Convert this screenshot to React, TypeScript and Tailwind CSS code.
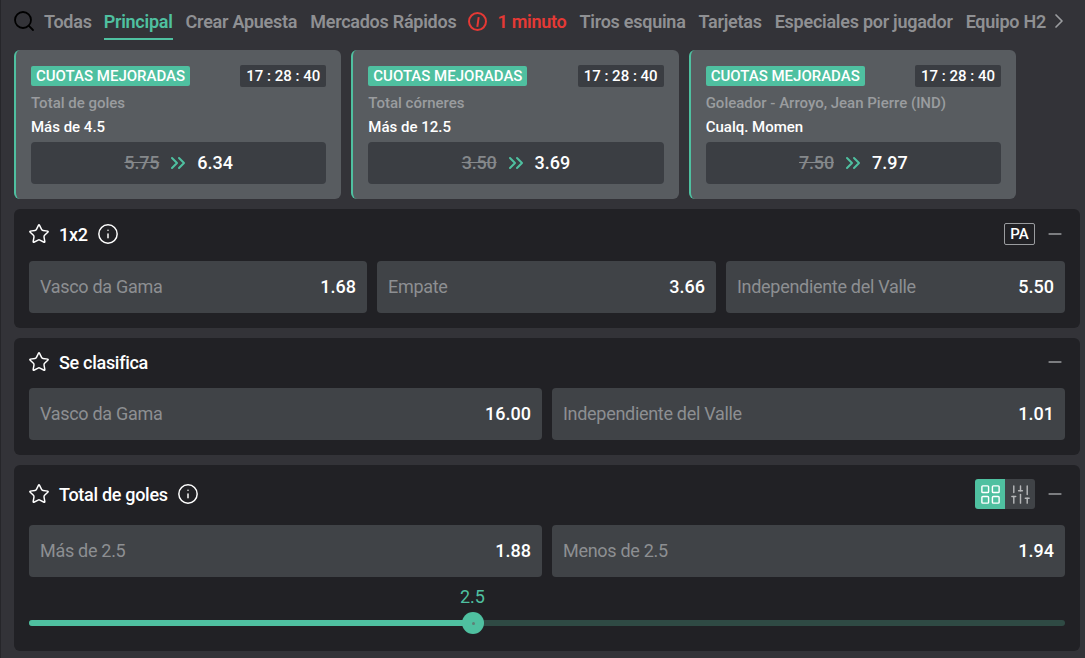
import type { ReactNode } from 'react'
import { Star, Info, ChevronRight, Search, Minus, ChevronsRight, LayoutGrid, SlidersVertical } from 'lucide-react'

const tabs = ['Crear Apuesta', 'Mercados Rápidos']
const tabsAfter = ['Tiros esquina', 'Tarjetas', 'Especiales por jugador', 'Equipo H2']

const boosts = [
  { market: 'Total de goles', pick: 'Más de 4.5', oldOdd: '5.75', newOdd: '6.34' },
  { market: 'Total córneres', pick: 'Más de 12.5', oldOdd: '3.50', newOdd: '3.69' },
  { market: 'Goleador - Arroyo, Jean Pierre (IND)', pick: 'Cualq. Momen', oldOdd: '7.50', newOdd: '7.97' },
]

function BoostCard({ market, pick, oldOdd, newOdd }: { market: string; pick: string; oldOdd: string; newOdd: string }) {
  return (
    <div className="w-[327.33px] h-[149px] rounded-[6px] bg-[#585c60] border-l-2 border-[#4fc0a0] pl-[15px] pr-[15px] pt-[15px]">
      <div className="flex items-center justify-between h-[22px]">
        <span className="h-[20px] px-[5px] rounded-[2px] bg-[#4fc0a0] text-white text-[15px] font-medium leading-[20px]">CUOTAS MEJORADAS</span>
        <span className="h-[22px] w-[86px] text-center rounded-[2px] bg-[#3a3d42] text-white text-[15px] font-medium leading-[22px]">17 : 28 : 40</span>
      </div>
      <div className="mt-[6px] text-[15px] leading-[20px] font-medium text-[#9a9c9f]">{market}</div>
      <div className="mt-[4px] text-[15px] leading-[20px] font-medium text-white">{pick}</div>
      <div className="mt-[5px] h-[42px] rounded-[4px] bg-[#3b3e43] flex items-center justify-center pb-[1px]">
        <span className="text-[18px] font-medium tracking-[-0.2px] text-[#85888b] line-through">{oldOdd}</span>
        <ChevronsRight className="w-[24px] h-[24px] mx-[7px] text-[#4fc0a0]" strokeWidth={2} />
        <span className="text-[18px] font-medium text-white">{newOdd}</span>
      </div>
    </div>
  )
}

function Odd({ label, value, wide }: { label: string; value: string; wide?: boolean }) {
  return (
    <div className={wide ? 'w-[338px] flex-none h-[52px] rounded-[4px] bg-[#404347] flex items-center justify-between px-[11px] pb-[2px]' : 'flex-1 h-[52px] rounded-[4px] bg-[#404347] flex items-center justify-between px-[11px] pb-[2px]'}>
      <span className="text-[18px] tracking-[-0.3px] text-[#8d8f92]">{label}</span>
      <span className="text-[18px] font-medium text-white">{value}</span>
    </div>
  )
}

function Header({ title, info, children }: { title: string; info?: boolean; children?: ReactNode }) {
  return (
    <div className="flex items-center h-[50px] pl-[14px] pr-[15px]">
      <Star className="w-[22px] h-[22px] text-white" strokeWidth={1.6} />
      <span className="ml-[9px] text-[18px] font-medium tracking-[-0.3px] text-white">{title}</span>
      {info && <Info className="ml-[9px] w-[22px] h-[22px] text-white" strokeWidth={1.6} />}
      <div className="ml-auto flex items-center">
        {children}
        <Minus className="ml-[10px] w-[20px] h-[20px] text-[#9a9c9f]" />
      </div>
    </div>
  )
}

export default function App() {
  return (
    <div className="w-[1085px] h-[658px] overflow-hidden bg-[#333338] border-l border-[#26262a] font-['Roboto',sans-serif]">
      {/* Tabs */}
      <div className="flex items-start h-[50px] pl-[11px] text-[18px] font-semibold tracking-[-0.26px] text-[#8f9093] whitespace-nowrap">
        <Search className="w-[24px] h-[24px] mt-[9px] text-black" strokeWidth={1.8} />
        <span className="ml-[8px] mt-[8px]">Todas</span>
        <span className="ml-[12px] pt-[8px] h-[40px] border-b-2 border-[#4fc0a0] text-[#4fc0a0]">Principal</span>
        {tabs.map((t) => (
          <span key={t} className="ml-[13px] mt-[8px]">{t}</span>
        ))}
        <span className="ml-[12px] mt-[12px] w-[19px] h-[19px] rounded-full border-2 border-[#e53935] flex items-center justify-center">
          <span className="w-[2px] h-[10px] bg-[#e53935] rotate-[8deg]"></span>
        </span>
        <span className="ml-[10px] mt-[8px] text-[#e53935]">1 minuto</span>
        {tabsAfter.map((t) => (
          <span key={t} className="ml-[13px] mt-[8px]">{t}</span>
        ))}
        <ChevronRight className="ml-[1px] mt-[9px] w-[24px] h-[24px] text-[#9a9c9f]" strokeWidth={1.7} />
      </div>

      <div className="pl-[13px] pr-[5px]">
        {/* Boosted odds */}
        <div className="flex gap-[10px]">
          {boosts.map((b) => (
            <BoostCard key={b.market} {...b} />
          ))}
        </div>

        {/* 1x2 */}
        <div className="mt-[10px] h-[119px] rounded-[6px] bg-[#212125]">
          <Header title="1x2" info>
            <span className="h-[22px] w-[31px] rounded-[2px] border border-[#9a9c9f] text-center text-[15px] leading-[20px] font-medium text-white">PA</span>
          </Header>
          <div className="flex gap-[10px] px-[15px] pt-[2px]">
            <Odd label="Vasco da Gama" value="1.68" wide />
            <Odd label="Empate" value="3.66" />
            <Odd label="Independiente del Valle" value="5.50" />
          </div>
        </div>

        {/* Se clasifica */}
        <div className="mt-[10px] h-[117px] rounded-[6px] bg-[#212125] flex flex-col">
          <div className="h-[50px] -mt-[1px]">
            <Header title="Se clasifica" />
          </div>
          <div className="flex gap-[10px] px-[15px] pt-[1px]">
            <Odd label="Vasco da Gama" value="16.00" />
            <Odd label="Independiente del Valle" value="1.01" />
          </div>
        </div>

        {/* Total de goles */}
        <div className="mt-[10px] h-[186px] rounded-[6px] bg-[#212125]">
          <div className="h-[60px] pt-[4px]">
            <Header title="Total de goles" info>
              <div className="flex h-[30px] w-[60px] rounded-[3px] overflow-hidden">
                <span className="w-[30px] bg-[#4fc0a0] flex items-center justify-center">
                  <LayoutGrid className="w-[23px] h-[23px] text-white" strokeWidth={1.5} />
                </span>
                <span className="w-[30px] bg-[#404347] flex items-center justify-center">
                  <SlidersVertical className="w-[23px] h-[23px] text-[#b5b6b8]" strokeWidth={1.5} />
                </span>
              </div>
            </Header>
          </div>
          <div className="flex gap-[10px] px-[15px]">
            <Odd label="Más de 2.5" value="1.88" />
            <Odd label="Menos de 2.5" value="1.94" />
          </div>
          <div className="px-[15px]">
            <div className="relative h-[53px]">
              <span className="absolute left-[431px] top-[9px] text-[18px] leading-[21px] text-[#4fc0a0]">2.5</span>
              <div className="absolute left-0 right-0 top-[43px] h-[6px] rounded-full bg-[#2f4a44] flex">
                <div className="w-[444px] h-[6px] rounded-full bg-[#4fc0a0]"></div>
              </div>
              <div className="absolute left-[433px] top-[35px] w-[22px] h-[22px] rounded-full bg-[#4fc0a0] flex items-center justify-center">
                <span className="w-[3px] h-[3px] rounded-full bg-[#5f7f76]"></span>
              </div>
            </div>
          </div>
        </div>
      </div>
    </div>
  )
}
